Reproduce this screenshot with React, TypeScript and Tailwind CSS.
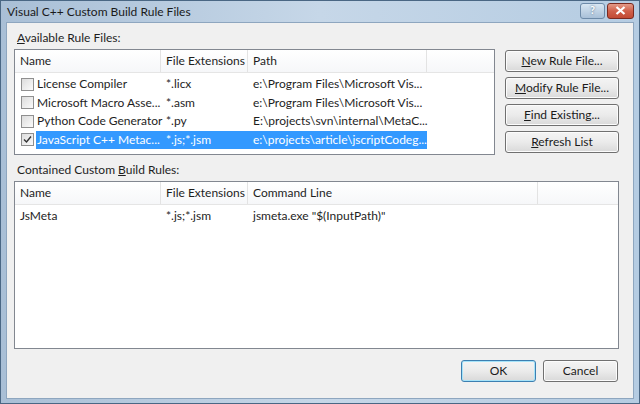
const font = { fontFamily: 'Lato, "Noto Sans", sans-serif' };

const Check = ({ checked }: { checked?: boolean }) => (
  <span className="w-[13px] h-[13px] border border-[#8f8f8f] bg-gradient-to-br from-[#dcdcdc] to-[#fbfbfb] flex items-center justify-center shrink-0">
    {checked && (
      <svg width="9" height="9" viewBox="0 0 9 9">
        <path d="M1 4.5 L3.5 7 L8 1.5" stroke="#333" strokeWidth="1.4" fill="none" />
      </svg>
    )}
  </span>
);

const Btn = ({ children, def }: { children: React.ReactNode; def?: boolean }) => (
  <button
    className={
      "h-[22px] rounded-[3px] border text-[12px] text-[#1b1b1b] bg-gradient-to-b from-[#f4f4f4] via-[#ebebeb] to-[#d9d9d9] " +
      (def ? "border-[#3c7fb1] shadow-[inset_0_0_0_1px_#a6e3f9]" : "border-[#707070] shadow-[inset_0_0_0_1px_#fcfcfc]")
    }
  >
    {children}
  </button>
);

const rules = [
  { name: "License Compiler", ext: "*.licx", path: "e:\\Program Files\\Microsoft Vis..." },
  { name: "Microsoft Macro Asse...", ext: "*.asm", path: "e:\\Program Files\\Microsoft Vis..." },
  { name: "Python Code Generator", ext: "*.py", path: "E:\\projects\\svn\\internal\\MetaC..." },
  { name: "JavaScript C++ Metac...", ext: "*.js;*.jsm", path: "e:\\projects\\article\\jscriptCodeg...", sel: true },
];

const Header = ({ cols }: { cols: [string, number][] }) => (
  <div className="flex h-[23px] border-b border-[#e5e5e5] bg-gradient-to-b from-white to-[#f6f7f9]">
    {cols.map(([t, w], i) => (
      <div
        key={i}
        className="flex items-center pl-[5px] border-r border-[#e3e3e3] text-[12px] text-[#1e1e1e] whitespace-nowrap"
        style={{ width: w }}
      >
        {t}
      </div>
    ))}
    <div className="flex-1" />
  </div>
);

export default function App() {
  return (
    <div
      className="w-[640px] h-[404px] flex flex-col bg-gradient-to-r from-[#a9bfd6] via-[#c6d7e8] to-[#b5cce2] border border-[#4a6784] overflow-hidden"
      style={font}
    >
      <div className="h-[21px] flex items-center justify-between pl-[6px] pr-[5px]">
        <span className="text-[12px] text-[#1a1a1a]">Visual C++ Custom Build Rule Files</span>
        <div className="flex gap-[2px] mt-[-2px]">
          <div className="w-[25px] h-[16px] rounded-[3px] border border-[#6d8aa8] bg-gradient-to-b from-[#d8e6f2] to-[#a9c0d8] flex items-center justify-center text-[11px] font-bold text-white [text-shadow:0_0_2px_#3b5b7a]">
            ?
          </div>
          <div className="w-[27px] h-[16px] rounded-[3px] border border-[#7a2a20] bg-gradient-to-b from-[#e39a88] via-[#d0604a] to-[#c24a33] flex items-center justify-center">
            <svg width="11" height="9" viewBox="0 0 11 9">
              <path d="M1.5 1 L9.5 8 M9.5 1 L1.5 8" stroke="white" strokeWidth="2.2" />
            </svg>
          </div>
        </div>
      </div>
      <div className="flex-1 mx-[5px] mb-[4px] bg-[#f0f0f0] border border-[#8ea6bf] flex flex-col px-[7px] text-[12px] text-[#1e1e1e]">
        <div className="h-[26px] flex items-end pl-[3px] pb-[2px]">
          <span><u>A</u>vailable Rule Files:</span>
        </div>
        <div className="flex gap-[10px]">
          <div className="w-[481px] h-[106px] bg-white border border-[#828790]">
            <Header cols={[["Name", 146], ["File Extensions", 87], ["Path", 179]]} />
            <div className="pt-[2px]">
              {rules.map((r, i) => (
                <div key={i} className="flex h-[18.5px] items-center">
                  <div className="w-[21px] pl-[6px] flex items-center">
                    <Check checked={r.sel} />
                  </div>
                  <div
                    className={"flex h-full items-center " + (r.sel ? "bg-[#3399ff] text-white" : "")}
                  >
                    <div className="w-[125px] pl-[1px] whitespace-nowrap">{r.name}</div>
                    <div className="w-[87px] pl-[5px]">{r.ext}</div>
                    <div className="w-[179px] pl-[5px] whitespace-nowrap">{r.path}</div>
                  </div>
                </div>
              ))}
            </div>
          </div>
          <div className="w-[114px] flex flex-col gap-[5px] pt-[1px]">
            <Btn><u>N</u>ew Rule File...</Btn>
            <Btn><u>M</u>odify Rule File...</Btn>
            <Btn><u>F</u>ind Existing...</Btn>
            <Btn><u>R</u>efresh List</Btn>
          </div>
        </div>
        <div className="h-[26px] flex items-end pl-[3px] pb-[2px]">
          <span>Contained Custom <u>B</u>uild Rules:</span>
        </div>
        <div className="w-[605px] h-[168px] bg-white border border-[#828790]">
          <Header cols={[["Name", 146], ["File Extensions", 87], ["Command Line", 290]]} />
          <div className="flex h-[20px] items-center mt-[1px]">
            <div className="w-[146px] pl-[5px]">JsMeta</div>
            <div className="w-[87px] pl-[5px]">*.js;*.jsm</div>
            <div className="pl-[5px]">jsmeta.exe "$(InputPath)"</div>
          </div>
        </div>
        <div className="flex justify-end gap-[7px] mt-[11px] mr-[8px]">
          <div className="w-[75px] flex flex-col"><Btn def>OK</Btn></div>
          <div className="w-[75px] flex flex-col"><Btn>Cancel</Btn></div>
        </div>
      </div>
    </div>
  );
}
